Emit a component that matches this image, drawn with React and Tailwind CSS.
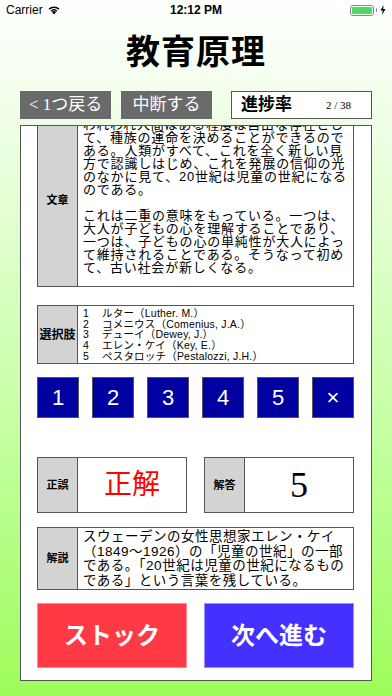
import React from "react";

const SERIF = { fontFamily: '"Liberation Serif", "Noto Sans CJK JP", serif' };
const SANS = { fontFamily: '"Liberation Sans", "Noto Sans CJK JP", sans-serif' };

function Label({ children, size = "text-[11px]" }) {
  return (
    <div
      className={`w-[40px] shrink-0 bg-[#d3d3d3] border-r border-[#555] flex items-center justify-center font-bold text-black ${size}`}
      style={SERIF}
    >
      {children}
    </div>
  );
}

const bunsho = [
  "われわれ人間はある程度は自由な存在とし",
  "て、種族の運命を決めることができるので",
  "ある。人類がすべて、これを全く新しい見",
  "方で認識しはじめ、これを発展の信仰の光",
  "のなかに見て、20世紀は児童の世紀になる",
  "のである。",
  "\u00a0",
  "これは二重の意味をもっている。一つは、",
  "大人が子どもの心を理解することであり、",
  "一つは、子どもの心の単純性が大人によっ",
  "て維持されることである。そうなって初め",
  "て、古い社会が新しくなる。",
];

const choices = [
  ["1", "ルター（Luther. M.）"],
  ["2", "コメニウス（Comenius, J.A.）"],
  ["3", "デューイ（Dewey, J.）"],
  ["4", "エレン・ケイ（Key, E.）"],
  ["5", "ペスタロッチ（Pestalozzi, J.H.）"],
];

const kaisetsu = [
  "スウェーデンの女性思想家エレン・ケイ",
  "（1849〜1926）の「児童の世紀」の一部",
  "である。「20世紀は児童の世紀になるもの",
  "である」という言葉を残している。",
];

export default function App() {
  return (
    <div className="w-[392px] h-[696px] overflow-hidden bg-gradient-to-b from-white to-[#9dfc57] flex flex-col">
      {/* status bar */}
      <div className="h-[20px] flex items-center justify-between px-[6px] text-[12px] text-black" style={SANS}>
        <div className="flex items-center gap-[4px] w-[100px]">
          <span>Carrier</span>
          <svg width="14" height="10" viewBox="0 0 14 10">
            <path d="M7 9.5 L9.2 7 A3.3 3.3 0 0 0 4.8 7 Z" fill="#000" />
            <path d="M3.6 5.7 A5 5 0 0 1 10.4 5.7 L9.5 6.7 A3.8 3.8 0 0 0 4.5 6.7 Z" fill="#000" />
            <path d="M1.6 3.6 A7.8 7.8 0 0 1 12.4 3.6 L11.4 4.7 A6.3 6.3 0 0 0 2.6 4.7 Z" fill="#000" />
          </svg>
        </div>
        <div className="font-semibold">12:12 PM</div>
        <div className="flex items-center justify-end gap-[2px] w-[100px]">
          <div className="w-[24px] h-[11px] border border-[#888] rounded-[3px] p-[1px] flex">
            <div className="flex-1 bg-[#4cd964] rounded-[1px]" />
          </div>
          <div className="w-[1.5px] h-[4px] bg-[#888] rounded-r" />
          <svg width="6" height="10" viewBox="0 0 6 10" className="ml-[1px]">
            <path d="M3.5 0 L0.5 5.5 L2.7 5.5 L2 10 L5.5 4 L3.2 4 Z" fill="#000" />
          </svg>
        </div>
      </div>

      {/* title */}
      <div className="h-[64px] flex items-center justify-center">
        <div className="text-[34px] font-bold text-black tracking-[1px]" style={SERIF}>
          教育原理
        </div>
      </div>

      {/* top buttons */}
      <div className="h-[28px] mt-[7px] mx-[20px] flex items-stretch">
        <div className="w-[91px] bg-[#6a6a6a] text-white text-[17px] flex items-center justify-center" style={SERIF}>
          &lt; 1つ戻る
        </div>
        <div className="w-[91px] ml-[10px] bg-[#6a6a6a] text-white text-[17px] flex items-center justify-center" style={SERIF}>
          中断する
        </div>
        <div className="flex-1 ml-[19px] bg-white border border-[#555] flex items-center pl-[9px] pr-[20px] justify-between" style={SERIF}>
          <span className="text-[17px] font-bold">進捗率</span>
          <span className="text-[11px]">2 / 38</span>
        </div>
      </div>

      {/* panel */}
      <div className="mx-[20px] mt-[6px] h-[556px] bg-white border border-[#555] overflow-hidden">
        <div className="pl-[16px] pr-[17px] -mt-[11px] flex flex-col">
          {/* 文章 */}
          <div className="flex border border-t-0 border-[#555] bg-white">
            <Label>文章</Label>
            <div className="flex-1 pl-[5px] pt-[3px] pb-[12px] text-[13px] tracking-[0.8px] leading-[13px] text-black" style={SANS}>
              {bunsho.map((l, i) => (
                <div key={i} className="whitespace-nowrap">{l}</div>
              ))}
            </div>
          </div>

          {/* 選択肢 */}
          <div className="flex border border-[#555] mt-[18px]">
            <Label size="text-[12px]">選択肢</Label>
            <div className="flex-1 pl-[5px] pt-[2px] pb-[1.5px] text-[10.5px] tracking-[0.2px] leading-[10.7px] text-black" style={SANS}>
              {choices.map(([n, t]) => (
                <div key={n} className="flex whitespace-nowrap">
                  <span className="w-[19px]">{n}</span>
                  <span>{t}</span>
                </div>
              ))}
            </div>
          </div>

          {/* number buttons */}
          <div className="mt-[13px] flex justify-between">
            {["1", "2", "3", "4", "5", "×"].map((n) => (
              <div
                key={n}
                className="w-[42px] h-[41px] bg-[#0000a0] border border-[#555] text-white text-[22px] flex items-center justify-center"
                style={SANS}
              >
                {n}
              </div>
            ))}
          </div>

          {/* 正誤 / 解答 */}
          <div className="mt-[39px] flex justify-between">
            <div className="w-[150px] h-[56px] flex border border-[#555]">
              <Label>正誤</Label>
              <div className="flex-1 flex items-center justify-center text-[28px] text-[#ff0000]" style={SERIF}>
                正解
              </div>
            </div>
            <div className="w-[150px] h-[56px] flex border border-[#555]">
              <Label>解答</Label>
              <div className="flex-1 flex items-center justify-center text-[36px] text-black" style={SERIF}>
                5
              </div>
            </div>
          </div>

          {/* 解説 */}
          <div className="flex border border-[#555] mt-[14px]">
            <Label>解説</Label>
            <div className="flex-1 pl-[5px] pt-[2px] pb-[1px] text-[13.5px] tracking-[0.5px] leading-[14.5px] text-black" style={SANS}>
              {kaisetsu.map((l, i) => (
                <div key={i} className="whitespace-nowrap">{l}</div>
              ))}
            </div>
          </div>

          {/* action buttons */}
          <div className="mt-[13px] flex justify-between">
            <div
              className="w-[150px] h-[65px] bg-[#ff3a44] border border-[#ff8a90] text-white text-[24px] font-bold flex items-center justify-center"
              style={SERIF}
            >
              ストック
            </div>
            <div
              className="w-[150px] h-[65px] bg-[#4430ff] border border-[#9a90ff] text-white text-[24px] font-bold flex items-center justify-center"
              style={SERIF}
            >
              次へ進む
            </div>
          </div>
        </div>
      </div>
    </div>
  );
}
